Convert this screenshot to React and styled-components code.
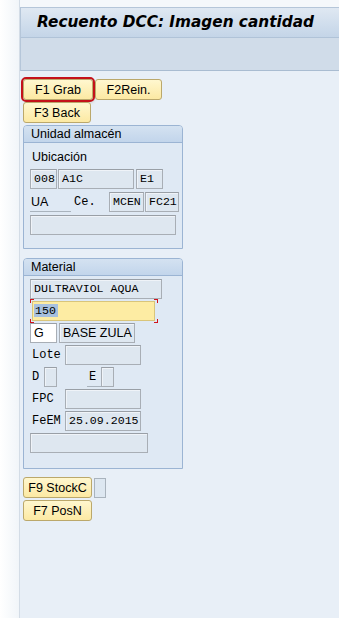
import React from 'react'
import styled, { createGlobalStyle } from 'styled-components'

const GlobalStyle = createGlobalStyle`
  html, body {
    margin: 0;
    padding: 0;
    background: #f5f8fb;
  }
  * {
    box-sizing: border-box;
  }
`

const Page = styled.div`
  display: flex;
  width: 339px;
  height: 618px;
  overflow: hidden;
  font-family: 'Liberation Sans', Arial, sans-serif;
`

const SideStrip = styled.div`
  width: 20px;
  flex-shrink: 0;
  background: linear-gradient(to right, #ffffff, #f1f5f9);
  border-right: 1px solid #d3dce6;
`

const Main = styled.div`
  flex: 1;
  display: flex;
  flex-direction: column;
  background: #e8eff7;
  padding-top: 7px;
  background-image: linear-gradient(#f5f8fb, #f5f8fb);
  background-size: 100% 7px;
  background-repeat: no-repeat;
`

const TitleBar = styled.div`
  height: 31px;
  background: linear-gradient(#dfe8f2, #c4d5e8);
  border-top: 1px solid #b5c6d9;
  border-left: 1px solid #b5c6d9;
  border-bottom: 1px solid #b0c3d8;
  display: flex;
  align-items: center;
  padding-left: 16px;
  padding-bottom: 2px;
`

const Title = styled.h1`
  margin: 0;
  font-family: 'DejaVu Sans', Verdana, sans-serif;
  font-size: 15.3px;
  font-weight: bold;
  font-style: italic;
  color: #000;
`

const Toolbar = styled.div`
  height: 33px;
  background: #d0dce9;
  border-left: 1px solid #b5c6d9;
  border-bottom: 1px solid #a9bcd1;
`

const Content = styled.div`
  display: flex;
  flex-direction: column;
  align-items: flex-start;
  padding: 8px 0 0 3px;
`

const ButtonRow = styled.div`
  display: flex;
  align-items: center;
  gap: 2px;
  margin-bottom: ${p => p.mb || 0}px;
`

const Button = styled.button`
  height: 21px;
  width: ${p => p.w}px;
  padding: 0;
  background: linear-gradient(#fff7cf, #fce9a3);
  border: 1px solid #bba86b;
  border-radius: 3px;
  font-family: 'Liberation Sans', Arial, sans-serif;
  font-size: 12.5px;
  color: #000;
  display: flex;
  align-items: center;
  justify-content: center;
  outline: ${p => (p.focus ? '2px solid #c4111a' : 'none')};
  outline-offset: 0;
  box-shadow: ${p => (p.focus ? '1px 2px 3px rgba(120,110,60,0.35)' : 'none')};
`

const SmallBox = styled.div`
  width: 12px;
  height: 20px;
  background: #dde7f1;
  border: 1px solid #a9b3bd;
`

const Group = styled.div`
  width: 160px;
  height: ${p => p.h}px;
  border: 1px solid #9bb4d3;
  border-radius: 4px 4px 0 0;
  background: #dfe9f4;
  margin-bottom: ${p => p.mb || 0}px;
  display: flex;
  flex-direction: column;
`

const GroupHeader = styled.div`
  height: 17px;
  background: linear-gradient(#d4e2f1, #c2d5eb);
  border-bottom: 1px solid #9bb4d3;
  border-radius: 3px 3px 0 0;
  font-size: 12.5px;
  line-height: 16px;
  padding-left: 7px;
  color: #000;
`

const GroupBody = styled.div`
  display: flex;
  flex-direction: column;
  gap: ${p => p.gap || 2}px;
  padding: ${p => p.pt || 4}px 0 0 6px;
`

const Row = styled.div`
  display: flex;
  align-items: center;
  height: 20px;
  gap: ${p => (p.gap === undefined ? 1 : p.gap)}px;
`

const SansLabel = styled.div`
  font-size: 12.5px;
  color: #000;
  height: 18px;
  line-height: 18px;
  padding-left: 2px;
`

const Label = styled.div`
  width: ${p => p.w}px;
  padding-left: ${p => (p.pl === undefined ? 2 : p.pl)}px;
  height: 20px;
  line-height: 20px;
  color: #000;
  border-bottom: ${p => (p.under ? '1px solid #a9b3bd' : 'none')};
  font-family: ${p => (p.sans ? "'Liberation Sans', Arial, sans-serif" : "'Liberation Mono', 'Courier New', monospace")};
  font-size: ${p => (p.sans ? '12.5px' : '12px')};
`

const Field = styled.div`
  width: ${p => p.w}px;
  height: 20px;
  background: ${p => (p.white ? '#ffffff' : '#dee7f0')};
  border: 1px solid #a8aeb5;
  border-top-color: #999fa6;
  box-shadow: inset 1px 1px 0 rgba(255, 255, 255, 0.5);
  font-family: ${p => (p.sans ? "'Liberation Sans', Arial, sans-serif" : "'Liberation Mono', 'Courier New', monospace")};
  font-size: ${p => (p.sans ? '12.5px' : '11.6px')};
  line-height: 18px;
  padding-left: 3px;
  color: #000;
  white-space: nowrap;
  overflow: hidden;
`

const FocusWrap = styled.div`
  position: relative;
  width: 128px;
  height: 20px;
  padding: 0 2px;
`

const Corner = styled.span`
  position: absolute;
  width: 4px;
  height: 4px;
  border-color: #d0141c;
  border-style: solid;
  border-width: 0;
  ${p => (p.top ? 'top: -2px;' : 'bottom: -2px;')}
  ${p => (p.left ? 'left: 0;' : 'right: 0;')}
  ${p => (p.top ? 'border-top-width: 1px;' : 'border-bottom-width: 1px;')}
  ${p => (p.left ? 'border-left-width: 1px;' : 'border-right-width: 1px;')}
`

const Input = styled.div`
  width: 123px;
  height: 20px;
  background: #fdeca3;
  border: 1px solid #d9c57a;
  font-family: 'Liberation Mono', 'Courier New', monospace;
  font-size: 11.6px;
  line-height: 18px;
  padding-left: 1px;
  color: #000;
`

const Selected = styled.span`
  background: #a7c0de;
  padding: 0 2px 0 1px;
`

export default function App() {
  return (
    <>
      <GlobalStyle />
      <Page>
        <SideStrip />
        <Main>
          <TitleBar>
            <Title>Recuento DCC: Imagen cantidad</Title>
          </TitleBar>
          <Toolbar />
          <Content>
            <ButtonRow mb={2}>
              <Button w={70} focus>F1 Grab</Button>
              <Button w={67}>F2Rein.</Button>
            </ButtonRow>
            <ButtonRow mb={2}>
              <Button w={68}>F3 Back</Button>
            </ButtonRow>

            <Group h={124} mb={9}>
              <GroupHeader>Unidad almacén</GroupHeader>
              <GroupBody pt={5} gap={3}>
                <SansLabel>Ubicación</SansLabel>
                <Row>
                  <Field w={27}>008</Field>
                  <Field w={76}>A1C</Field>
                  <Field w={27} style={{ marginLeft: 1 }}>E1</Field>
                </Row>
                <Row>
                  <Label w={41} under sans pl={1}>UA</Label>
                  <Label w={36}>Ce.</Label>
                  <Field w={35}>MCEN</Field>
                  <Field w={34}>FC21</Field>
                </Row>
                <Row>
                  <Field w={146} />
                </Row>
              </GroupBody>
            </Group>

            <Group h={211} mb={8}>
              <GroupHeader>Material</GroupHeader>
              <GroupBody pt={3} gap={2}>
                <Row>
                  <Field w={132}>DULTRAVIOL AQUA</Field>
                </Row>
                <Row>
                  <FocusWrap>
                    <Corner top left />
                    <Corner top />
                    <Corner left />
                    <Corner />
                    <Input>
                      <Selected>150</Selected>
                    </Input>
                  </FocusWrap>
                </Row>
                <Row>
                  <Field w={27} white sans>G</Field>
                  <Field w={76} sans style={{ marginLeft: 1 }}>BASE ZULA</Field>
                </Row>
                <Row gap={0}>
                  <Label w={35}>Lote</Label>
                  <Field w={76} />
                </Row>
                <Row gap={0}>
                  <Label w={14}>D</Label>
                  <Field w={13} />
                  <Label w={30} pl={0} />
                  <Label w={14} under>E</Label>
                  <Field w={13} />
                </Row>
                <Row gap={0}>
                  <Label w={35}>FPC</Label>
                  <Field w={76} />
                </Row>
                <Row gap={0}>
                  <Label w={35}>FeEM</Label>
                  <Field w={76}>25.09.2015</Field>
                </Row>
                <Row>
                  <Field w={118} />
                </Row>
              </GroupBody>
            </Group>

            <ButtonRow mb={2}>
              <Button w={69}>F9 StockC</Button>
              <SmallBox />
            </ButtonRow>
            <ButtonRow>
              <Button w={69}>F7 PosN</Button>
            </ButtonRow>
          </Content>
        </Main>
      </Page>
    </>
  )
}
